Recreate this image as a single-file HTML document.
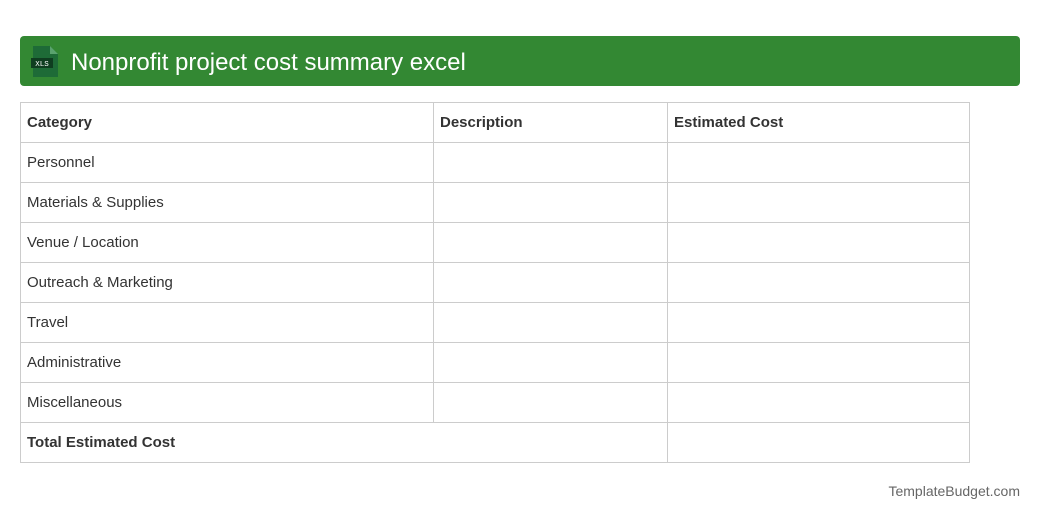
<!DOCTYPE html>
<html><head><meta charset="utf-8"><style>
body{margin:0;width:1040px;height:520px;background:#fff;font-family:"Liberation Sans",Arial,sans-serif;position:relative;overflow:hidden}
.hdr{position:absolute;left:20px;top:36px;width:1000px;height:50px;background:#338833;border-radius:4px}
.hdr .t{position:absolute;left:51px;top:13px;color:#fff;font-size:24px;line-height:28px}
table{position:absolute;left:20px;top:102px;border-collapse:collapse;font-size:15px;color:#333}
td{border:1px solid #ccc;height:40px;padding:0 0 0 6px;box-sizing:border-box}
.b{font-weight:bold}
.ft{position:absolute;right:20px;top:483px;font-size:14px;color:#666}
</style></head><body>
<div class="hdr">
<svg style="position:absolute;left:10px;top:10px" width="30" height="31" viewBox="0 0 30 31">
<path d="M3 0H20L28 8V31H3Z" fill="#1e6b37"/>
<path d="M20 0V8H28Z" fill="#5aa36e"/>
<rect x="1" y="12" width="22" height="10" fill="#0f3d20"/>
<text x="12" y="20" font-size="7.5" fill="#fff" text-anchor="middle" font-family="Liberation Mono,monospace">XLS</text>
</svg>
<div class="t">Nonprofit project cost summary excel</div>
</div>
<table>
<tr><td class="b" style="width:413px">Category</td><td class="b" style="width:234px">Description</td><td class="b" style="width:302px">Estimated Cost</td></tr>
<tr><td>Personnel</td><td></td><td></td></tr>
<tr><td>Materials &amp; Supplies</td><td></td><td></td></tr>
<tr><td>Venue / Location</td><td></td><td></td></tr>
<tr><td>Outreach &amp; Marketing</td><td></td><td></td></tr>
<tr><td>Travel</td><td></td><td></td></tr>
<tr><td>Administrative</td><td></td><td></td></tr>
<tr><td>Miscellaneous</td><td></td><td></td></tr>
<tr><td class="b" colspan="2">Total Estimated Cost</td><td></td></tr>
</table>
<div class="ft">TemplateBudget.com</div>
</body></html>
